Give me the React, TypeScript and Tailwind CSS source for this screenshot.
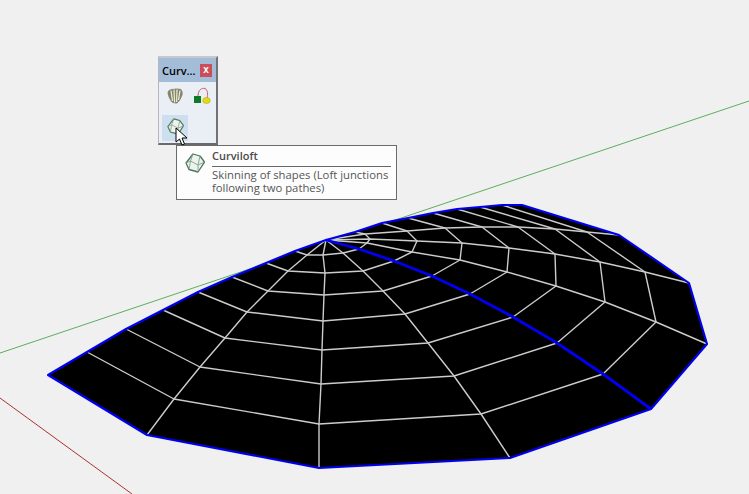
const apex: [number, number] = [326, 240];

// rings[r][k]: node of ring r (1..8) on radial k (0..8)
const rings: [number, number][][] = [
  [[295, 251], [307, 255], [323, 255], [343, 253], [359, 249], [367, 243], [370, 239], [365, 234], [355, 232]],
  [[266, 263], [288, 271], [325, 273], [363, 271], [394, 261], [412, 252], [417, 241], [407, 231], [382, 223]],
  [[232, 277], [268, 291], [324, 295], [383, 291], [432, 276], [460, 260], [462, 243], [445, 228], [408, 218]],
  [[198, 292], [247, 312], [323, 321], [405, 314], [470, 294], [507, 272], [509, 248], [482, 227], [433, 213]],
  [[163, 310], [225, 338], [322, 350], [428, 343], [513, 317], [556, 286], [555, 254], [518, 227], [457, 209]],
  [[126, 329], [200, 367], [321, 384], [454, 376], [557, 343], [605, 302], [600, 262], [555, 229], [480, 207]],
  [[87, 352], [174, 399], [319, 424], [481, 414], [603, 374], [656, 322], [645, 272], [587, 232], [502, 205]],
  [[48, 375], [147, 435], [319, 468], [510, 458], [651, 409], [707, 344], [689, 283], [619, 235], [522, 205]],
];

const pts = (list: [number, number][]) => list.map((p) => p.join(",")).join(" ");
const radial = (k: number): [number, number][] => [apex, ...rings.map((r) => r[k])];
const outline: [number, number][] = [
  apex,
  ...rings.map((r) => r[8]),
  ...[...rings[7]].reverse().slice(1),
  ...[...rings].reverse().slice(1).map((r) => r[0]),
];

function Scene() {
  return (
    <svg width="749" height="494" viewBox="0 0 749 494" className="block">
      <line x1="0" y1="353" x2="749" y2="101" stroke="#5cae5c" strokeWidth="1" />
      <line x1="0" y1="398" x2="132" y2="494" stroke="#a83232" strokeWidth="1" />
      <polygon points={pts(outline)} fill="#000" />
      <g fill="none" stroke="#cccccc" strokeWidth="1.4" strokeLinejoin="round">
        {rings.slice(0, 7).map((r, i) => (
          <polyline key={i} points={pts(r)} />
        ))}
        {[1, 2, 3, 5, 6, 7].map((k) => (
          <polyline key={k} points={pts(radial(k))} />
        ))}
      </g>
      <polyline points={pts(radial(4))} fill="none" stroke="#0000f0" strokeWidth="2.8" />
      <polygon points={pts(outline)} fill="none" stroke="#0000f0" strokeWidth="2.1" strokeLinejoin="round" />
    </svg>
  );
}

function LoftIcon({ className }: { className: string }) {
  return (
    <svg viewBox="0 0 20 20" className={className} fill="none">
      <path d="M8 1 L15 3 L19.5 9 L13 19 L4 16.5 L1 10 Z" fill="#eef2ec" stroke="#47775a" strokeWidth="1.3" strokeLinejoin="round" />
      <path d="M8 1 L5.5 8 L13 12 L19.5 9 M5.5 8 L1 10 M13 12 L13 19 M15 3 L13 12 M5.5 8 L4 16.5" stroke="#7f9f8a" strokeWidth="0.9" />
    </svg>
  );
}

function ShellIcon() {
  return (
    <svg viewBox="0 0 16 16" className="w-[16px] h-[16px]">
      <path d="M0.5 5 Q1 1.5 5 1 Q10 0 14 1 Q16 3 15.5 7 Q14 12 10 15.5 Q6 16 4 13.5 Q1 9 0.5 5 Z" fill="#83856f" />
      <path d="M4 2.5 L5.5 13 M7 1.5 L7.6 14.5 M10 1.5 L9.6 14 M13 2.5 L11.5 12" stroke="#efecd6" strokeWidth="1.2" fill="none" />
    </svg>
  );
}

function PathIcon() {
  return (
    <svg viewBox="0 0 18 18" className="w-[18px] h-[18px]">
      <path d="M5 9 C5 3 9 0.5 12 1.5 C15 3 15 8 14 11" fill="none" stroke="#d0586c" strokeWidth="1" />
      <rect x="1" y="9" width="7" height="7" fill="#0d7a2a" />
      <ellipse cx="13.5" cy="13.5" rx="3.8" ry="3" fill="#e6d818" stroke="#a89c10" strokeWidth="0.5" />
    </svg>
  );
}

function Toolbar() {
  return (
    <div className="absolute left-[158px] top-[56px] w-[60px] h-[89px] flex flex-col bg-[#eaeff5] border-t-2 border-t-[#c4c8cc] border-l border-l-[#b4b8bd] border-r-2 border-r-[#6f7276] border-b-2 border-b-[#6a6a6a]">
      <div className="h-[24px] flex items-center justify-between pl-[3px] pr-[4px] bg-[#a3bdd9]">
        <span className="text-[11px] font-semibold text-black leading-none font-['Open_Sans',sans-serif]">Curv...</span>
        <span className="w-[12px] h-[13px] flex items-center justify-center bg-[#c9505a] text-white text-[10px] font-bold leading-none font-['Liberation_Sans',sans-serif]">x</span>
      </div>
      <div className="grid grid-cols-2 gap-x-[1px] gap-y-[6px] pl-[3px] pt-[1px] w-[56px]">
        <div className="w-[26px] h-[26px] flex items-center justify-center"><ShellIcon /></div>
        <div className="w-[26px] h-[26px] flex items-center justify-center"><PathIcon /></div>
        <div className="w-[26px] h-[26px] flex items-center justify-center bg-[#cddfee]"><LoftIcon className="w-[17px] h-[17px] -mt-[4px]" /></div>
      </div>
    </div>
  );
}

function Tooltip() {
  return (
    <div className="absolute left-[176px] top-[145px] w-[221px] h-[55px] flex items-start gap-[7px] pl-[8px] pt-[3px] pr-[5px] bg-[#fdfdfd] border border-[#6b6b6b] font-['Open_Sans',sans-serif] text-[#555555]">
      <LoftIcon className="w-[20px] h-[20px] mt-[4px] shrink-0" />
      <div className="flex-1 min-w-0">
        <div className="text-[11px] font-semibold leading-[13px] text-[#4a4a4a] border-b border-b-[#666666] h-[18px]">Curviloft</div>
        <div className="text-[11.3px] leading-[13px] pt-[1px] whitespace-pre-line">{"Skinning of shapes (Loft junctions\nfollowing two pathes)"}</div>
      </div>
    </div>
  );
}

function Cursor() {
  return (
    <svg viewBox="0 0 14 20" className="absolute left-[175px] top-[127px] w-[14px] h-[20px]">
      <path d="M1 1 L1 15 L4.5 12 L7 18 L9.5 17 L7 11 L12 11 Z" fill="#fff" stroke="#000" strokeWidth="1" strokeLinejoin="miter" />
    </svg>
  );
}

export default function App() {
  return (
    <div className="relative w-[749px] h-[494px] overflow-hidden bg-[#f0f0f0]">
      <Scene />
      <Toolbar />
      <Tooltip />
      <Cursor />
    </div>
  );
}
